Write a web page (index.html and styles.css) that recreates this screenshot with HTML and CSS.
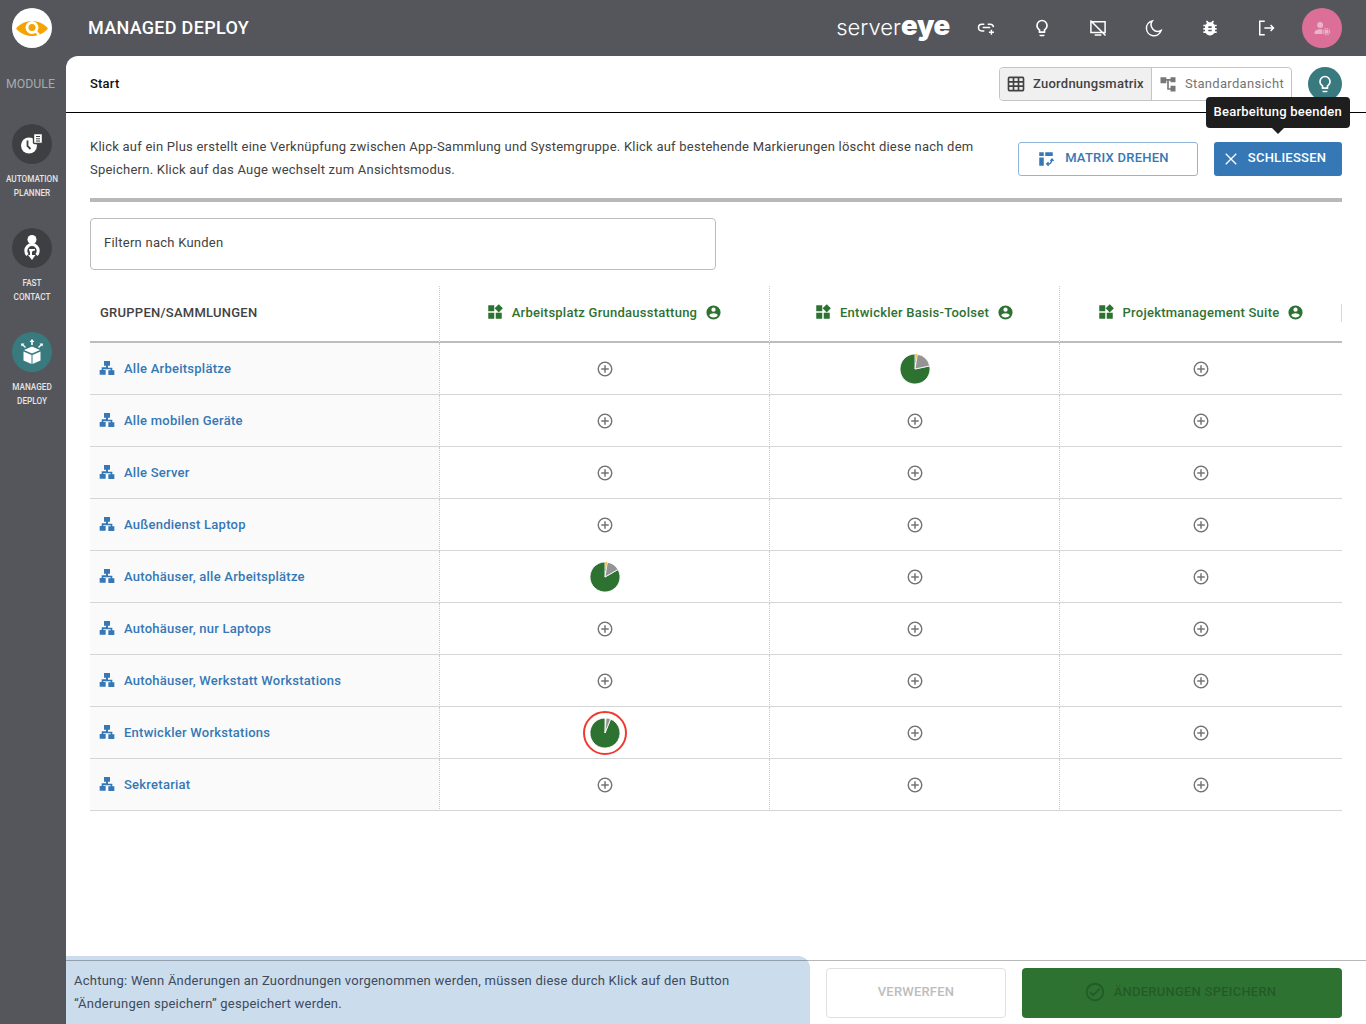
FILE: index.html
```html
<!DOCTYPE html>
<html lang="de">
<head>
<meta charset="utf-8">
<title>Managed Deploy</title>
<link rel="stylesheet" href="styles.css">
</head>
<body>
<svg class="defs" width="0" height="0" aria-hidden="true">
  <symbol id="i-plus" viewBox="0 0 24 24"><path d="M12,20C7.59,20 4,16.41 4,12C4,7.59 7.59,4 12,4C16.41,4 20,7.59 20,12C20,16.41 16.41,20 12,20M12,2A10,10 0 0,0 2,12A10,10 0 0,0 12,22A10,10 0 0,0 22,12A10,10 0 0,0 12,2M13,7H11V11H7V13H11V17H13V13H17V11H13V7Z"/></symbol>
  <symbol id="i-site" viewBox="0 0 24 24"><path d="M7.500 1.500h9v7h-3v3H20v4h3v7h-9v-7h3.500v-1.500h-11V15H10v7H1v-7h3v-4h6.500V8.500h-3z"/></symbol>
  <symbol id="i-apps" viewBox="0 0 24 24"><path d="M3 3h8v8H3zM3 13h8v8H3zM13 13h8v8h-8zM17 1.500L22.500 7 17 12.500 11.500 7z"/></symbol>
  <symbol id="i-acct" viewBox="0 0 24 24"><path d="M12,19.2C9.5,19.2 7.29,17.92 6,16C6.03,14 10,12.9 12,12.9C14,12.9 17.97,14 18,16C16.71,17.92 14.5,19.2 12,19.2M12,5A3,3 0 0,1 15,8A3,3 0 0,1 12,11A3,3 0 0,1 9,8A3,3 0 0,1 12,5M12,2A10,10 0 0,0 2,12A10,10 0 0,0 12,22A10,10 0 0,0 22,12A10,10 0 0,0 12,2Z"/></symbol>
  <symbol id="i-bulb" viewBox="0 0 24 24"><path d="M12,2A7,7 0 0,0 5,9C5,11.38 6.19,13.47 8,14.74V17A1,1 0 0,0 9,18H15A1,1 0 0,0 16,17V14.74C17.81,13.47 19,11.38 19,9A7,7 0 0,0 12,2M9,21A1,1 0 0,0 10,22H14A1,1 0 0,0 15,21V20H9V21M14.85,13.1L14,13.7V16H10V13.7L9.15,13.1C7.8,12.16 7,10.63 7,9A5,5 0 0,1 12,4A5,5 0 0,1 17,9C17,10.63 16.2,12.16 14.85,13.1Z"/></symbol>
</svg>

<header class="topbar">
  <div class="logo-cell">
    <span class="logo">
      <svg viewBox="0 0 40 40" width="40" height="40"><path class="eye" d="M4 20.500C9 15 14 13 20 13S31 15 36 20.500C31 26 26 28 20 28S9 26 4 20.500Z"/><circle class="eye-hole" cx="20" cy="19.500" r="6.500"/><circle class="eye-ring" cx="20" cy="19.500" r="3.500"/><path class="eye-tail" d="M23.500 23l3.500 4"/></svg>
    </span>
  </div>
  <h1 class="app-title">MANAGED DEPLOY</h1>
  <div class="brand"><span class="brand-thin">server</span><span class="brand-bold">eye</span></div>
  <nav class="top-icons">
    <svg class="ti" viewBox="0 0 24 24"><path d="M10 7.500H7a4 4 0 0 0 0 8h3M14 7.500h3a4 4 0 0 1 4 3.500M8 11.500h9M18.500 14v6M15.500 17h6"/></svg>
    <svg class="ti" viewBox="0 0 24 24"><path class="fill-w" d="M12,2A7,7 0 0,0 5,9C5,11.38 6.19,13.47 8,14.74V17A1,1 0 0,0 9,18H15A1,1 0 0,0 16,17V14.74C17.81,13.47 19,11.38 19,9A7,7 0 0,0 12,2M9,21A1,1 0 0,0 10,22H14A1,1 0 0,0 15,21V20H9V21M14.85,13.1L14,13.7V16H10V13.7L9.15,13.1C7.8,12.16 7,10.63 7,9A5,5 0 0,1 12,4A5,5 0 0,1 17,9C17,10.63 16.2,12.16 14.85,13.1Z"/></svg>
    <svg class="ti" viewBox="0 0 24 24"><path d="M3.500 4.500h17v13h-17zM3 3l18 18M8 20.500h8"/></svg>
    <svg class="ti" viewBox="0 0 24 24"><path d="M10 3.500a9 9 0 1 0 10.500 11.500 8 8 0 0 1-10.500-11.500z"/></svg>
    <svg class="ti" viewBox="0 0 24 24"><path class="fill-w" d="M14,12H10V10H14M14,16H10V14H14M20,8H17.19C16.74,7.22 16.12,6.55 15.37,6.04L17,4.41L15.59,3L13.42,5.17C12.96,5.06 12.5,5 12,5C11.5,5 11.04,5.06 10.59,5.17L8.41,3L7,4.41L8.62,6.04C7.88,6.55 7.26,7.22 6.81,8H4V10H6.09C6.04,10.33 6,10.66 6,11V12H4V14H6V15C6,15.34 6.04,15.67 6.09,16H4V18H6.81C7.85,19.79 9.78,21 12,21C14.22,21 16.15,19.79 17.19,18H20V16H17.91C17.96,15.67 18,15.34 18,15V14H20V12H18V11C18,10.66 17.96,10.33 17.91,10H20V8Z"/></svg>
    <svg class="ti" viewBox="0 0 24 24"><path d="M10.500 4H4.500v16h6M10 12h11M17.500 8.500L21 12l-3.500 3.500"/></svg>
  </nav>
  <span class="avatar">
    <svg viewBox="0 0 24 24" width="18" height="18"><circle cx="9.500" cy="8" r="4"/><path d="M2 20v-2c0-3 4.500-4.500 7.500-4.500 1 0 2 .1 3 .4V20z"/><circle class="gear" cx="18" cy="17" r="2.800"/><circle class="gear-dots" cx="18" cy="17" r="4.200"/></svg>
  </span>
</header>

<div class="shell">
  <aside class="sidebar">
    <div class="module-label">MODULE</div>
    <div class="module">
      <span class="mod-icon">
        <svg viewBox="0 0 40 40" width="40" height="40"><circle class="w" cx="17" cy="21.500" r="8"/><path class="k" d="M15.500 16.500V22l3 3"/><rect class="w k-edge" x="21.500" y="9.500" width="9" height="10" rx="1"/><path class="k thin" d="M24 12.500h4M24 14.800h4M24 17h4"/></svg>
      </span>
      <span class="mod-label">AUTOMATION<br>PLANNER</span>
    </div>
    <div class="module">
      <span class="mod-icon">
        <svg viewBox="0 0 40 40" width="40" height="40"><circle class="w" cx="20" cy="11.500" r="4.500"/><path class="arc" d="M15.500 27a6.200 6.200 0 1 1 9 0"/><path class="w" d="M17 21h6v1.500c-2 0-3 .8-3 2v2.500h3.500L20 32l-4-5h2v-2.500c0-1-1-1.500-1-3.500z"/></svg>
      </span>
      <span class="mod-label">FAST<br>CONTACT</span>
    </div>
    <div class="module">
      <span class="mod-icon mod-active">
        <svg viewBox="0 0 40 40" width="40" height="40"><path class="w" d="M20 14.500l8 3.500-8 3.500-8-3.500z"/><path class="w" d="M11.500 19.500l8 3.500v9l-8-3.500zM28.500 19.500l-8 3.500v9l8-3.500z"/><path class="w" d="M20 7l2.500 3h-1.700v3h-1.600v-3h-1.700zM9 11.500h3.500l-1 1 2.500 2.500-1 1-2.500-2.500-1 1zM31 11.500h-3.500l1 1-2.500 2.500 1 1 2.500-2.500 1 1z"/></svg>
      </span>
      <span class="mod-label">MANAGED<br>DEPLOY</span>
    </div>
  </aside>

  <main class="main">
    <div class="tabs">
      <span class="crumb">Start</span>
      <div class="view-switch">
        <span class="view view-on">
          <svg class="vi" viewBox="0 0 24 24"><path d="M4,3H20A2,2 0 0,1 22,5V19A2,2 0 0,1 20,21H4A2,2 0 0,1 2,19V5A2,2 0 0,1 4,3M4,5V8.500H8V5H4M10,5V8.500H14V5H10M20,8.500V5H16V8.500H20M4,10.500V13.500H8V10.500H4M4,19H8V15.500H4V19M10,10.500V13.500H14V10.500H10M10,19H14V15.500H10V19M20,19V15.500H16V19H20M20,10.500H16V13.500H20V10.500Z"/></svg>
          <span>Zuordnungsmatrix</span>
        </span>
        <span class="view">
          <svg class="vi vi-grey" viewBox="0 0 24 24"><path d="M3 4h7v7H3zM10 6h5v2h-2v9h2v2h-4V8h-1zM15 4h6v6h-6zM15 14h6v7h-6z"/></svg>
          <span>Standardansicht</span>
        </span>
      </div>
      <span class="hint-btn"><svg viewBox="0 0 24 24" width="20" height="20"><use href="#i-bulb"/></svg></span>
      <div class="tooltip">Bearbeitung beenden</div>
    </div>

    <div class="content">
      <div class="intro">
        <p class="intro-text">Klick auf ein Plus erstellt eine Verknüpfung zwischen App-Sammlung und Systemgruppe. Klick auf bestehende Markierungen löscht diese nach dem Speichern. Klick auf das Auge wechselt zum Ansichtsmodus.</p>
        <button class="btn btn-outline" type="button">
          <svg viewBox="0 0 24 24" width="18" height="18"><path d="M3 3h6v5H3zM3 10h6v11H3zM11 3h10v5H11z"/><path class="swap" d="M13.500 18.500c3.500 1 6-1 6.500-6M17.800 14.500l2.200-2.500 2.200 2.500M15.500 21l-2.500-2.500 2.500-2"/></svg>
          MATRIX DREHEN
        </button>
        <button class="btn btn-solid" type="button">
          <svg viewBox="0 0 24 24" width="18" height="18"><path class="x" d="M5 5l14 14M19 5L5 19"/></svg>
          SCHLIESSEN
        </button>
      </div>
      <div class="rule"></div>
      <div class="filter">Filtern nach Kunden</div>

      <table class="matrix">
        <colgroup><col class="c0"><col class="c1"><col class="c2"><col class="c3"></colgroup>
        <thead>
          <tr>
            <th class="head-first">GRUPPEN/SAMMLUNGEN</th>
            <th><span class="app"><svg class="app-ic"><use href="#i-apps"/></svg>Arbeitsplatz Grundausstattung<svg class="acct-ic"><use href="#i-acct"/></svg></span></th>
            <th><span class="app"><svg class="app-ic"><use href="#i-apps"/></svg>Entwickler Basis-Toolset<svg class="acct-ic"><use href="#i-acct"/></svg></span></th>
            <th class="head-last"><span class="app"><svg class="app-ic"><use href="#i-apps"/></svg>Projektmanagement Suite<svg class="acct-ic"><use href="#i-acct"/></svg></span></th>
          </tr>
        </thead>
        <tbody>
          <tr>
            <td class="group"><svg class="site"><use href="#i-site"/></svg>Alle Arbeitsplätze</td>
            <td><svg class="add"><use href="#i-plus"/></svg></td>
            <td><svg class="pie" viewBox="0 0 32 32"><path class="p-g" d="M16 16L30.670 12.880A15 15 0 1 1 16 1Z"/><path class="p-n" d="M16 16L18.350 1.180A15 15 0 0 1 30.670 12.880Z"/><path class="p-o" d="M16.300 10L16.520 1.010A15 15 0 0 1 17.830 1.110L16.800 10Z"/></svg></td>
            <td><svg class="add"><use href="#i-plus"/></svg></td>
          </tr>
          <tr>
            <td class="group"><svg class="site"><use href="#i-site"/></svg>Alle mobilen Geräte</td>
            <td><svg class="add"><use href="#i-plus"/></svg></td>
            <td><svg class="add"><use href="#i-plus"/></svg></td>
            <td><svg class="add"><use href="#i-plus"/></svg></td>
          </tr>
          <tr>
            <td class="group"><svg class="site"><use href="#i-site"/></svg>Alle Server</td>
            <td><svg class="add"><use href="#i-plus"/></svg></td>
            <td><svg class="add"><use href="#i-plus"/></svg></td>
            <td><svg class="add"><use href="#i-plus"/></svg></td>
          </tr>
          <tr>
            <td class="group"><svg class="site"><use href="#i-site"/></svg>Außendienst Laptop</td>
            <td><svg class="add"><use href="#i-plus"/></svg></td>
            <td><svg class="add"><use href="#i-plus"/></svg></td>
            <td><svg class="add"><use href="#i-plus"/></svg></td>
          </tr>
          <tr>
            <td class="group"><svg class="site"><use href="#i-site"/></svg>Autohäuser, alle Arbeitsplätze</td>
            <td><svg class="pie" viewBox="0 0 32 32"><path class="p-g" d="M16 16L16 1A15 15 0 1 0 28.990 8.500Z"/><path class="p-n" d="M16 16L18.350 1.180A15 15 0 0 1 28.990 8.500Z"/><path class="p-o" d="M16.300 10L16.520 1.010A15 15 0 0 1 17.830 1.110L16.800 10Z"/></svg></td>
            <td><svg class="add"><use href="#i-plus"/></svg></td>
            <td><svg class="add"><use href="#i-plus"/></svg></td>
          </tr>
          <tr>
            <td class="group"><svg class="site"><use href="#i-site"/></svg>Autohäuser, nur Laptops</td>
            <td><svg class="add"><use href="#i-plus"/></svg></td>
            <td><svg class="add"><use href="#i-plus"/></svg></td>
            <td><svg class="add"><use href="#i-plus"/></svg></td>
          </tr>
          <tr>
            <td class="group"><svg class="site"><use href="#i-site"/></svg>Autohäuser, Werkstatt Workstations</td>
            <td><svg class="add"><use href="#i-plus"/></svg></td>
            <td><svg class="add"><use href="#i-plus"/></svg></td>
            <td><svg class="add"><use href="#i-plus"/></svg></td>
          </tr>
          <tr>
            <td class="group"><svg class="site"><use href="#i-site"/></svg>Entwickler Workstations</td>
            <td><span class="ringed"><svg class="pie" viewBox="0 0 32 32"><path class="p-g" d="M16 16L21.600 2.090A15 15 0 1 1 16 1Z"/><path class="p-n" d="M16 16L17 1.030A15 15 0 0 1 21.600 2.090Z"/></svg></span></td>
            <td><svg class="add"><use href="#i-plus"/></svg></td>
            <td><svg class="add"><use href="#i-plus"/></svg></td>
          </tr>
          <tr>
            <td class="group"><svg class="site"><use href="#i-site"/></svg>Sekretariat</td>
            <td><svg class="add"><use href="#i-plus"/></svg></td>
            <td><svg class="add"><use href="#i-plus"/></svg></td>
            <td><svg class="add"><use href="#i-plus"/></svg></td>
          </tr>
        </tbody>
      </table>
    </div>

    <footer class="footer">
      <p class="note">Achtung: Wenn Änderungen an Zuordnungen vorgenommen werden, müssen diese durch Klick auf den Button “Änderungen speichern” gespeichert werden.</p>
      <button class="btn-discard" type="button">VERWERFEN</button>
      <button class="btn-save" type="button">
        <svg viewBox="0 0 24 24" width="22" height="22"><path d="M12 2C6.500 2 2 6.500 2 12S6.500 22 12 22 22 17.500 22 12 17.500 2 12 2M12 20C7.590 20 4 16.410 4 12S7.590 4 12 4 20 7.590 20 12 16.410 20 12 20M16.590 7.580L10 14.170L7.410 11.590L6 13L10 17L18 9L16.590 7.580Z"/></svg>
        ÄNDERUNGEN SPEICHERN
      </button>
    </footer>
  </main>
</div>
</body>
</html>
```

FILE: styles.css
```css
* { box-sizing: border-box; }
html, body { margin: 0; height: 100%; }
body {
  width: 1366px;
  height: 1024px;
  overflow: hidden;
  display: flex;
  flex-direction: column;
  background: #54565b;
  font-family: Roboto, "Liberation Sans", sans-serif;
  color: #424242;
}
.defs { position: absolute; }

/* top bar */
.topbar { flex: 0 0 56px; display: flex; align-items: center; padding-right: 24px; }
.logo-cell { width: 66px; display: flex; justify-content: flex-start; padding-left: 12px; }
.logo { width: 40px; height: 40px; border-radius: 50%; background: #fff; display: block; }
.logo svg { display: block; }
.eye { fill: #f5a300; }
.eye-hole { fill: #fff; }
.eye-ring { fill: #f5a300; }
.eye-tail { stroke: #fff; stroke-width: 2.500; fill: none; }
.app-title { margin: 0 0 2px 22px; font-size: 18px; font-weight: 500; letter-spacing: .3px; color: #fff; flex: 1; }
.brand { color: #fff; line-height: 1; display: flex; align-items: baseline; margin-bottom: 4px; font-family: Inter, Roboto, sans-serif; }
.brand-thin { font-size: 22px; font-weight: 300; }
.brand-bold { font-size: 27.500px; font-weight: 900; letter-spacing: -.3px; }
.top-icons { display: flex; gap: 36px; margin: 0 26px 0 26px; }
.ti { width: 20px; height: 20px; display: block; fill: none; stroke: #fff; stroke-width: 1.800; }
.ti .fill-w { fill: #fff; stroke: none; }
.avatar { width: 40px; height: 40px; border-radius: 50%; background: #dc6f97; display: flex; align-items: center; justify-content: center; }
.avatar svg { fill: #e9b3c8; }
.avatar .gear { fill: #e9b3c8; }
.avatar .gear-dots { fill: none; stroke: #e9b3c8; stroke-width: 1.600; stroke-dasharray: 2 1.300; }

.shell { flex: 1; display: flex; min-height: 0; }

/* sidebar */
.sidebar { flex: 0 0 66px; display: flex; flex-direction: column; align-items: center; padding: 20px 2px 0 0; }
.module-label { font-size: 12.300px; line-height: 16px; color: #a9aaad; margin: 0 3px 32px 0; }
.module { display: flex; flex-direction: column; align-items: center; height: 104px; }
.mod-icon { width: 40px; height: 40px; border-radius: 50%; background: #3e3f42; display: block; }
.mod-icon svg { display: block; }
.mod-active { background: #387a7e; }
.mod-icon .w { fill: #fff; }
.mod-icon .k { fill: none; stroke: #3e3f42; stroke-width: 1.800; }
.mod-icon .k-edge { stroke: #3e3f42; stroke-width: 1.400; }
.mod-icon .arc { fill: none; stroke: #fff; stroke-width: 3; }
.mod-icon .thin { stroke-width: 1; }
.mod-label { margin-top: 8px; font-size: 8.200px; font-weight: 500; line-height: 14px; color: #e4e4e4; text-align: center; white-space: nowrap; }

/* main */
.main { flex: 1; min-width: 0; background: #fff; border-top-left-radius: 12px; display: flex; flex-direction: column; }
.tabs { flex: 0 0 57px; display: flex; align-items: center; padding: 0 24px; border-bottom: 1px solid #000; position: relative; }
.crumb { flex: 1; padding-bottom: 2px; font-size: 13px; font-weight: 500; color: #111; letter-spacing: .2px; }
.view-switch { display: flex; height: 34px; border: 1px solid #c4c4c4; border-radius: 4px; overflow: hidden; font-size: 13px; letter-spacing: .3px; margin-right: 16px; }
.view { display: flex; align-items: center; gap: 7px; padding: 0 7px 2px 6px; color: #757575; }
.view + .view { border-left: 1px solid #c4c4c4; }
.view-on { background: #f0f0f0; color: #424242; font-weight: 500; letter-spacing: .24px; }
.vi { width: 20px; height: 20px; fill: #424242; margin-top: 2px; }
.vi-grey { fill: #777; }
.hint-btn { width: 34px; height: 34px; border-radius: 50%; background: #387a7e; display: flex; align-items: center; justify-content: center; fill: #fff; }
.tooltip { position: absolute; right: 16px; top: 41px; height: 31px; padding: 0 8px; background: #1e1e1e; border-radius: 4px; color: #fff; font-size: 13px; font-weight: 500; line-height: 30px; letter-spacing: .25px; white-space: nowrap; z-index: 2; }
.tooltip::after { content: ""; position: absolute; left: 50%; bottom: -6px; margin-left: -6px; border: 6px solid transparent; border-bottom: 0; border-top-color: #1e1e1e; }

.content { flex: 1; min-height: 0; padding: 22px 24px 0; }
.intro { display: flex; align-items: flex-start; }
.intro-text { margin: 0 14px 0 0; flex: 1; font-size: 13px; line-height: 23px; letter-spacing: .235px; color: #424242; }
.btn { height: 34px; margin-top: 7px; padding: 0 10px 4px 0; border-radius: 3px; display: flex; align-items: center; justify-content: center; gap: 10px; font: 500 13px Roboto, sans-serif; letter-spacing: .25px; cursor: pointer; }
.btn svg { margin-top: 4px; }
.btn-outline { flex: 0 0 180px; margin-right: 16px; background: #fff; border: 1px solid #90b5d8; color: #3578b5; fill: #3578b5; }
.btn-outline .swap { fill: none; stroke: #3578b5; stroke-width: 1.800; }
.btn-solid { flex: 0 0 128px; padding-right: 8px; gap: 8px; background: #3578b5; border: 0; color: #fff; }
.btn-solid .x { fill: none; stroke: #fff; stroke-width: 1.800; }
.rule { height: 4px; background: #b8b8b8; margin-top: 17px; }
.filter { width: 626px; height: 52px; margin: 16px 0; padding: 0 13px; border: 1px solid #bdbdbd; border-radius: 4px; font-size: 13px; line-height: 48px; letter-spacing: .25px; color: #424242; }

/* matrix */
.matrix { width: 1252px; table-layout: fixed; border-collapse: separate; border-spacing: 0; }
.c0 { width: 350px; }
.c1 { width: 330px; }
.c2 { width: 290px; }
.c3 { width: 282px; }
.matrix th { height: 57px; padding: 0; font-weight: 500; font-size: 13px; letter-spacing: .25px; text-align: center; border-bottom: 2px solid #bdbdbd; border-right: 1px dotted #c8c8c8; }
.matrix th.head-first { text-align: left; padding: 0 0 2px 10px; color: #424242; font-size: 13px; }
.matrix th.head-last { border-right: 0; position: relative; }
.head-last::after { content: ""; position: absolute; right: 0; top: 18px; width: 1px; height: 18px; background: #d8d8d8; }
.matrix td { height: 52px; padding: 0; text-align: center; vertical-align: middle; border-bottom: 1px solid #d6d6d6; border-right: 1px dotted #c8c8c8; }
.matrix td:last-child { border-right: 0; }
.matrix tr td.group { text-align: left; padding: 0 0 2px 9px; background: #fafafa; color: #3578b5; font-size: 13px; font-weight: 500; letter-spacing: .25px; }
.app { display: inline-flex; align-items: center; color: #2e7232; padding-right: 1px; }
.app-ic { width: 18px; height: 18px; fill: #2e7232; margin-right: 8px; }
.acct-ic { width: 17px; height: 17px; fill: #2e7232; margin-left: 8px; }
.site { width: 16px; height: 16px; fill: #3578b5; margin-right: 9px; vertical-align: -3px; }
.add { width: 18px; height: 18px; fill: #757575; display: block; margin: 1px auto 0; }
.pie { width: 32px; height: 32px; display: block; margin: 0 auto; }
.p-g { fill: #2e7232; }
.p-o { fill: #f5a300; }
.p-n { fill: #949494; }
.pie path { stroke: #fff; stroke-width: .8; }
.pie .p-o { stroke: none; }
.ringed { width: 44px; height: 44px; border: 2px solid #ee3a30; border-radius: 50%; display: flex; align-items: center; justify-content: center; margin: 0 auto; }

/* footer */
.footer { flex: 0 0 64px; display: flex; align-items: flex-start; position: relative; padding-right: 24px; }
.footer::after { content: ""; position: absolute; left: 0; right: 0; top: 0; height: 1px; background: rgba(0, 0, 0, .28); }
.note { flex: 0 0 744px; height: 68px; margin: -4px 16px 0 0; padding: 13px 8px 0; background: #cbdcec; border-radius: 0 12px 0 0; font-size: 13px; line-height: 23px; letter-spacing: .24px; color: #3d4a5c; }
.btn-discard { flex: 0 0 180px; height: 50px; margin: 8px 16px 0 0; padding-bottom: 4px; background: #fff; border: 1px solid #e0e0e0; border-radius: 4px; font: 500 13px Roboto, sans-serif; letter-spacing: .2px; color: #bdbdbd; }
.btn-save { flex: 0 0 320px; height: 50px; margin-top: 8px; padding: 0 2px 4px 0; background: #2e7232; border: 0; border-radius: 4px; display: flex; align-items: center; justify-content: center; gap: 8px; font: 500 13px Roboto, sans-serif; letter-spacing: .24px; color: #245a28; fill: #245a28; }
.btn-save svg { margin: 2px 0 0 -2px; }
```
